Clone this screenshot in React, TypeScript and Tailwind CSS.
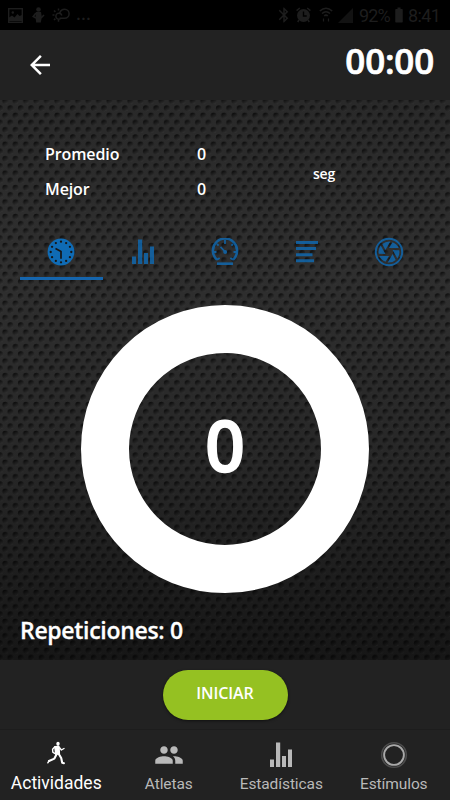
import type { ReactNode } from "react"
import clsx from "clsx"
import { MdArrowBack, MdPeople, MdBluetooth, MdBatteryFull } from "react-icons/md"

const BLUE = "#0f6bb5"

function Texture() {
  return (
    <svg className="absolute inset-0 h-full w-full" aria-hidden="true">
      <defs>
        <linearGradient id="base" x1="0" y1="0" x2="0" y2="1">
          <stop offset="0" stopColor="#292929" />
          <stop offset="0.3" stopColor="#2f2f2f" />
          <stop offset="0.65" stopColor="#272727" />
          <stop offset="1" stopColor="#161616" />
        </linearGradient>
        <linearGradient id="hole" x1="0.2" y1="0" x2="0.8" y2="1">
          <stop offset="0.1" stopColor="#000" stopOpacity="0.72" />
          <stop offset="0.5" stopColor="#000" stopOpacity="0.32" />
          <stop offset="0.8" stopColor="#000" stopOpacity="0.05" />
          <stop offset="1" stopColor="#fff" stopOpacity="0.14" />
        </linearGradient>
        <pattern id="mesh" width="10.42" height="14.46" patternUnits="userSpaceOnUse" x="0" y="-2.6">
          <circle cx="5.21" cy="3.6" r="2.9" fill="url(#hole)" />
          <circle cx="0" cy="10.83" r="2.9" fill="url(#hole)" />
          <circle cx="10.42" cy="10.83" r="2.9" fill="url(#hole)" />
        </pattern>
      </defs>
      <rect width="100%" height="100%" fill="url(#base)" />
      <rect width="100%" height="100%" fill="url(#mesh)" />
    </svg>
  )
}

function ClockIcon() {
  const hours = Array.from({ length: 12 }, (_, i) => (i * Math.PI) / 6)
  return (
    <svg width="28" height="28" viewBox="0 0 28 28">
      <circle cx="14" cy="14" r="13.4" fill={BLUE} />
      {hours.map((a) => (
        <circle key={a} cx={14 + 10.3 * Math.sin(a)} cy={14 - 10.3 * Math.cos(a)} r="1.15" fill="#161616" />
      ))}
      <path d="M8.5 10.6 14 13.4V20.8" fill="none" stroke="#161616" strokeWidth="1.7" />
    </svg>
  )
}

function BarsIcon({ color }: { color: string }) {
  return (
    <svg width="24" height="26" viewBox="0 0 24 26" fill={color}>
      <path d="M1 17.5h4V25H1zM7 0.5h4.2V25H7zM13 14h4v11h-4zM19 7.5h4V25h-4z" />
    </svg>
  )
}

function GaugeIcon() {
  return (
    <svg width="28" height="28" viewBox="0 0 28 28" fill="none" stroke={BLUE}>
      <path d="M6 21.7A12.1 12.1 0 1 1 22 21.7" strokeWidth="2.5" />
      <path d="M14 2v4M6 6l1.6 1.6M22 6l-1.6 1.6M2 14h3.5M22.5 14H26M6 21.8l2.7-1.8M22 21.8l-2.7-1.8" strokeWidth="1.8" />
      <path d="m9.5 8.8 4.8 5.2" strokeWidth="1.7" />
      <circle cx="14.2" cy="14" r="2" fill={BLUE} stroke="none" />
      <path d="M6 25.7h16" strokeWidth="2.6" />
    </svg>
  )
}

function LinesIcon() {
  return (
    <svg width="24" height="22" viewBox="0 0 24 22" fill={BLUE}>
      <path d="M1 0h22v3H1zM1 6h20v3H1zM1 12.3h16.5v3H1zM1 18.3h18v3H1z" />
    </svg>
  )
}

function ApertureIcon() {
  return (
    <svg width="30" height="30" viewBox="0 0 30 30">
      <circle cx="15" cy="15" r="13.2" fill="none" stroke={BLUE} strokeWidth="2" />
      {[0, 60, 120, 180, 240, 300].map((deg) => (
        <path key={deg} d="M8.3 7.1A10.5 10.5 0 0 1 16.4 4.6L11.4 13Z" fill={BLUE} transform={`rotate(${deg} 15 15)`} />
      ))}
    </svg>
  )
}

function RunnerIcon() {
  return (
    <svg width="20" height="24" viewBox="0 0 20 24" fill="none" stroke="#fff" strokeLinejoin="round" strokeLinecap="round">
      <ellipse cx="12" cy="2.8" rx="1.7" ry="2.1" fill="#fff" stroke="none" />
      <path d="M8.8 5.8 13 5.5 13.4 12.5 9.8 13.4z" fill="#fff" strokeWidth="1.4" />
      <path d="M8.6 6 6.6 8.2 6.8 11.2 8.6 12.4M13.6 6.8l1.8 2.2 2.6-1.5" strokeWidth="1.4" />
      <path d="M10.6 13.3 8.4 17.6 3 20M12.8 13l2.4 4 1 4.8 1.7.4" strokeWidth="2.1" />
      <path d="M3 20 1.8 21.8" strokeWidth="1.4" />
    </svg>
  )
}

function RingIcon() {
  return (
    <svg width="28" height="28" viewBox="0 0 28 28" fill="none">
      <circle cx="14" cy="14" r="12.3" stroke="#4c4c4c" strokeWidth="1.6" />
      <circle cx="14" cy="14" r="9.9" stroke="#a9a9a9" strokeWidth="1.9" />
    </svg>
  )
}

function StatusBar() {
  return (
    <div className="flex h-[30px] shrink-0 items-center justify-between bg-black pr-[10px] pl-[8px] font-['Roboto',sans-serif] font-normal text-[#1d1d1d]">
      <div className="flex items-center">
        <svg width="15" height="15" viewBox="0 0 15 15" fill="none" stroke="currentColor">
          <rect x="0.7" y="0.7" width="13.6" height="13.6" strokeWidth="1.4" />
          <path d="M1 13V9.5L4 7.5l2.5 2 3-3.5 2 2L14 7v6z" fill="currentColor" stroke="none" />
          <circle cx="4.8" cy="4.5" r="1.2" fill="currentColor" stroke="none" />
        </svg>
        <svg className="ml-[9px]" width="13" height="16" viewBox="0 0 13 16" fill="currentColor">
          <circle cx="6.5" cy="2.5" r="2.3" />
          <path d="M4 5h5l.8 5L8.8 15.5H4.2L3.5 10z" />
          <path d="M4 6 1.2 9.5 4 11M9 11l3-3" stroke="currentColor" strokeWidth="1.6" fill="none" />
        </svg>
        {/* Partly cloudy */}
        <svg className="ml-[7px]" width="18" height="14" viewBox="0 0 18 14" fill="none" stroke="currentColor" strokeWidth="1.5">
          <path d="M9 10.3A3 3 0 1 1 9.8 7.5M7.8 5C8.6 2.600 10.300 1.300 12.600 1.300a4.500 4.500 0 0 1 0 9H7.500" />
          <path d="M.5 7h2M2 2.500l1.400 1.400M2 12l1.400-1.400M6.500.5v2M6.500 11.800v2" />
        </svg>
        <span className="ml-[6px] h-4 text-[18px] leading-[14px] font-medium">...</span>
      </div>
      <div className="flex items-center">
        <MdBluetooth size={18} className="-mr-px" />
        <svg className="ml-[4px]" width="15" height="16" viewBox="0 0 15 16" fill="none" stroke="currentColor">
          <circle cx="7.500" cy="8.500" r="6.500" fill="currentColor" stroke="none" />
          <path d="M.6 3.600 3.800 1M14.400 3.600 11.200 1M3 13l-1.300 2M12 13l1.300 2" strokeWidth="1.500" />
          <path d="M7.500 4.500v4.500h3.200" stroke="#000" strokeWidth="1.400" />
        </svg>
        <svg className="ml-[8px]" width="14" height="16" viewBox="0 0 14 16" fill="none" stroke="currentColor" strokeWidth="1.6">
          <path d="M.8 4Q7-1.500 13.200 4M3 6.500q4-3.500 8 0M5.200 8.800q1.800-1.500 3.600 0" />
          <path d="M4.500 11.500v3M9.500 11.500v3" strokeWidth="1.200" />
        </svg>
        <svg className="ml-[5px]" width="15" height="15" viewBox="0 0 15 15" fill="#121212">
          <path d="M15 0v15H0z" />
        </svg>
        <span className="ml-[6px] w-[33px] text-[18px] tracking-[-0.9px]">92%</span>
        <MdBatteryFull size={18} className="-ml-[2px]" />
        <span className="w-[32px] text-[18px] tracking-[-0.6px]">8:41</span>
      </div>
    </div>
  )
}

const tabs: { id: string; icon: ReactNode }[] = [
  { id: "clock", icon: <ClockIcon /> },
  { id: "bars", icon: <BarsIcon color={BLUE} /> },
  { id: "gauge", icon: <GaugeIcon /> },
  { id: "list", icon: <LinesIcon /> },
  { id: "aperture", icon: <ApertureIcon /> },
]

const navItems: { label: string; icon: ReactNode }[] = [
  { label: "Actividades", icon: <RunnerIcon /> },
  { label: "Atletas", icon: <MdPeople size={30} /> },
  { label: "Estadísticas", icon: <BarsIcon color="#b9b9b9" /> },
  { label: "Estímulos", icon: <RingIcon /> },
]

export default function App() {
  return (
    <div className="flex h-[800px] w-[450px] flex-col overflow-hidden bg-[#222] font-['Open_Sans',sans-serif] font-semibold text-white">
      <StatusBar />

      <header className="flex h-[70px] shrink-0 items-center justify-between pr-[16px] pl-[25px]">
        <MdArrowBack size={30} />
        <span className="-mt-[9px] text-[35px] leading-none tracking-[-0.2px] [-webkit-text-stroke:0.7px_white]">00:00</span>
      </header>

      <main className="relative h-[560px] shrink-0">
        <Texture />
        <div className="relative flex h-full flex-col">
          <div className="flex h-[130px] pt-[38px] pl-[45px] text-[16px]">
            <div className="grid w-[268px] grid-cols-[151px_1fr] content-start gap-y-[3px] leading-8 tracking-[-0.1px]">
              <span>Promedio</span>
              <span className="pl-px">0</span>
              <span>Mejor</span>
              <span className="pl-px">0</span>
            </div>
            <span className="pt-[20px] text-[14px] leading-8 tracking-[-0.2px]">seg</span>
          </div>

          {/* Chart type tabs */}
          <div className="flex h-[50px] px-5">
            {tabs.map((tab, i) => (
              <div
                key={tab.id}
                className={clsx(
                  "flex shrink-0 items-center justify-center border-b-[3px]",
                  i === 0 ? "w-[83px] border-[#1565ad] pr-px" : "w-[82px] border-transparent pr-[2px] opacity-80"
                )}
              >
                <div className="-mt-[4px]">{tab.icon}</div>
              </div>
            ))}
          </div>

          <div className="mx-auto mt-[25px] flex size-[288px] shrink-0 items-center justify-center rounded-full border-[48px] border-white">
            <span className="-mt-[9px] text-[70px] leading-none [-webkit-text-stroke:1.4px_white]">0</span>
          </div>

          <p className="mt-[21px] pl-5 text-[23px] leading-8 tracking-[-0.3px] [-webkit-text-stroke:0.3px_white]">Repeticiones: 0</p>
        </div>
      </main>

      <div className="flex h-[69px] shrink-0 justify-center pt-[10px]">
        <button className="h-[50px] w-[125px] rounded-full bg-[#95c122] pb-[4px] text-[16px] tracking-[-0.1px] shadow-[0_1px_3px_#0008]">
          INICIAR
        </button>
      </div>

      <nav className="grid h-[71px] shrink-0 grid-cols-4 border-t border-[#1d1d1d] font-['Roboto',sans-serif] font-normal">
        {navItems.map((item, i) => (
          <div key={item.label} className={clsx("flex flex-col items-center", i === 0 ? "text-white" : "text-[#b9b9b9]")}>
            <div className={clsx("flex h-[50px] items-center justify-center", i === 0 && "pb-[4px]")}>{item.icon}</div>
            <span className={clsx("-mt-[7px] leading-5", i === 0 ? "text-[17.5px]" : "pt-px text-[15.5px] tracking-[-0.1px]")}>
              {item.label}
            </span>
          </div>
        ))}
      </nav>
    </div>
  )
}
